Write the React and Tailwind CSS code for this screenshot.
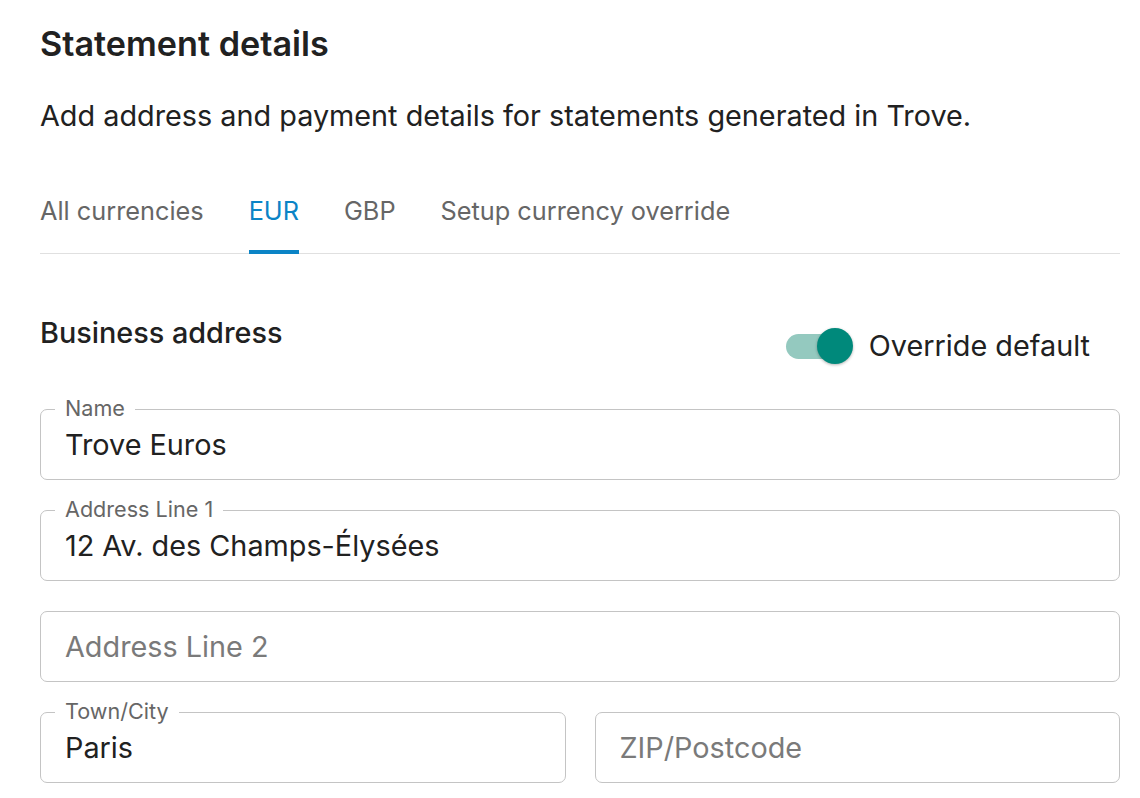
import React, { useState } from 'react';

const tabs = ['All currencies', 'EUR', 'GBP', 'Setup currency override'];

const Field = ({ label, value, placeholder }) => (
  <div className="relative h-[71px] w-full rounded-[7px] border border-[#c4c4c4] flex items-center">
    {label && (
      <span className="absolute left-[14px] top-[-12px] px-[10px] bg-white text-[21.6px] leading-[21px] text-[#666666]">
        {label}
      </span>
    )}
    <input
      readOnly
      defaultValue={value}
      placeholder={placeholder}
      className="w-full bg-transparent px-[24px] text-[28.8px] text-[#212121] outline-none placeholder:text-[#7a7a7a]"
    />
  </div>
);

const App = () => {
  const [active, setActive] = useState('EUR');
  const [override, setOverride] = useState(true);

  return (
    <div className="min-h-screen bg-white pl-[40px] pr-[20px] pt-[24px] font-['Inter',sans-serif] text-[#212121]">
      {/* HEADER */}
      <h1 className="text-[34.2px] leading-[40px] font-semibold">Statement details</h1>
      <p className="mt-[35px] text-[28.8px] leading-[34px]">
        Add address and payment details for statements generated in Trove.
      </p>

      {/* TABS */}
      <div className="mt-[36px] flex gap-[45px] border-b border-[#e0e0e0]">
        {tabs.map((tab) => (
          <button
            key={tab}
            onClick={() => setActive(tab)}
            className={`relative h-[84px] pb-[1px] text-[25.3px] ${
              active === tab ? 'text-[#0b84c6]' : 'text-[#666666]'
            }`}
          >
            {tab}
            {active === tab && (
              <span className="absolute left-0 right-0 bottom-[-1px] h-[4px] bg-[#0b84c6]" />
            )}
          </button>
        ))}
      </div>

      {/* BUSINESS ADDRESS */}
      <div className="mt-[62px] flex items-start justify-between">
        <h2 className="text-[28.8px] leading-[34px] font-medium">Business address</h2>
        <label className="mt-[12px] mr-[30px] flex items-center gap-[16px] cursor-pointer">
          <button
            onClick={() => setOverride(!override)}
            className="relative h-[36px] w-[67px]"
          >
            <span
              className={`absolute left-0 top-[6px] h-[25px] w-[58px] rounded-full ${
                override ? 'bg-[#94c9bf]' : 'bg-[#bdbdbd]'
              }`}
            />
            <span
              className={`absolute top-0 h-[36px] w-[36px] rounded-full shadow-[0_1px_3px_rgba(0,0,0,0.3)] ${
                override ? 'left-[31px] bg-[#00897b]' : 'left-0 bg-[#fafafa]'
              }`}
            />
          </button>
          <span className="text-[28.8px] leading-[34px]">Override default</span>
        </label>
      </div>

      {/* FORM */}
      <div className="mt-[45px] flex flex-col gap-[30px]">
        <Field label="Name" value="Trove Euros" />
        <Field label="Address Line 1" value="12 Av. des Champs-Élysées" />
        <Field placeholder="Address Line 2" />
        <div className="grid grid-cols-2 gap-[29px]">
          <Field label="Town/City" value="Paris" />
          <Field placeholder="ZIP/Postcode" />
        </div>
      </div>
    </div>
  );
};

export default App;
